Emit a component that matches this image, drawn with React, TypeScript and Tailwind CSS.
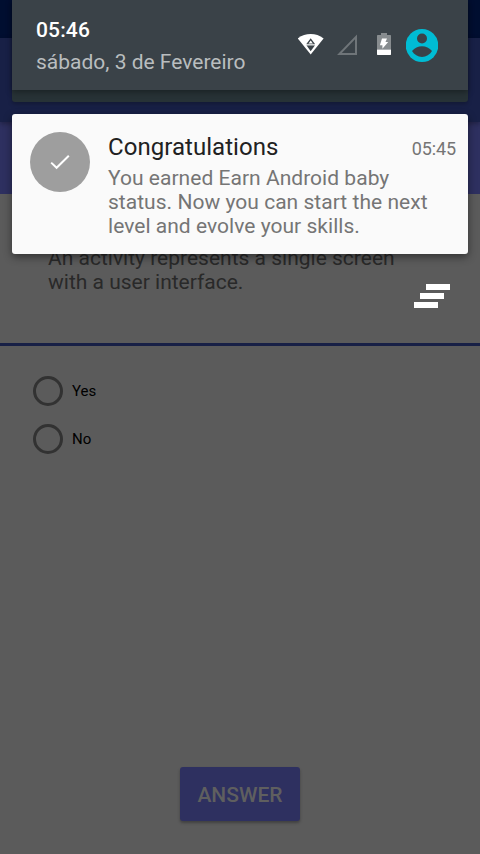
import React from "react";

function WifiIcon() {
  return (
    <svg className="block h-[22px] w-[26px]" viewBox="0 0 26 22">
      <path d="M-0.2 5.4 C7.3 -0.4 18.1 -0.4 25.6 5.4 L12.7 21.5 Z" fill="#fff" />
      <path d="M12.7 5.3 L17 11 H8.4 Z" fill="#3a4248" />
      <path d="M12.7 7.6 L14.9 10.5 H10.5 Z" fill="#fff" />
      <path d="M8.4 10.9 H17 V12.6 H8.4 Z" fill="#cfd2d3" />
      <path d="M8.6 12.6 H16.8 L12.7 18.2 Z" fill="#3a4248" />
    </svg>
  );
}

function SignalIcon() {
  return (
    <svg className="block h-[21px] w-[21px]" viewBox="0 0 21 21">
      <path d="M2.4 20 H19 V2.9 Z" fill="none" stroke="#6f7579" strokeWidth="2" />
    </svg>
  );
}

function BatteryIcon() {
  return (
    <svg className="block h-[22px] w-[14px]" viewBox="0 0 14 22">
      <path d="M4 0 H10 V2 H13.4 L14 2.6 V16.4 H0 V2.6 L0.6 2 H4 Z" fill="#878c8f" />
      <path d="M0 16.4 H14 V21.5 L13.5 22 H0.5 L0 21.5 Z" fill="#fff" />
      <path d="M5 5.6 H10 L8.5 9 H11.2 L5.4 15.8 V12.2 H2.9 Z" fill="#fff" />
    </svg>
  );
}

function AvatarIcon() {
  return (
    <svg className="block h-[34px] w-8" viewBox="0 0 32 34">
      <ellipse cx="16" cy="16.5" rx="16.3" ry="16.5" fill="#00bcd4" />
      <circle cx="16" cy="9.5" r="5" fill="#3a4248" />
      <path d="M6 22.1 C8.5 18.8 12.2 17.2 16 17.2 S23.5 18.8 26 22.1 C23.8 25.8 20.2 28 16 28 S8.2 25.8 6 22.1 Z" fill="#3a4248" />
    </svg>
  );
}

function Option({ label }: { label: string }) {
  return (
    <div className="flex h-12 items-center pl-[33px]">
      <span className="h-[30px] w-[30px] rounded-full border-[3px] border-[#323232]" />
      <span className="ml-[9px] text-[15px] leading-[18px] text-black">{label}</span>
    </div>
  );
}

function QuizScreen() {
  return (
    <div className="flex h-[854px] flex-col bg-[#5b5b5b]">
      <div className="h-[38px] shrink-0 bg-[#000e30]" />
      <div className="relative h-[84px] shrink-0 bg-[#182046] shadow-[0_2px_5px_rgba(0,0,0,0.3)]" />
      <div className="h-[72px] shrink-0 bg-[#2e3060]" />
      <div className="h-[152px] shrink-0 border-b-[3px] border-[#182046] pt-[52px] pl-12 text-[21px] leading-6 text-[#292929]">
        <p>An activity represents a single screen</p>
        <p>with a user interface.</p>
      </div>
      <div className="pt-[21px]">
        <Option label="Yes" />
        <Option label="No" />
      </div>
      <div className="mt-auto flex justify-center pb-[33px]">
        <button className="h-[54px] w-[120px] rounded-[3px] bg-[#2e3060] pt-[3px] text-[21px] font-medium text-[#5f5f5f] shadow-[0_2px_3px_rgba(0,0,0,0.3)]">
          ANSWER
        </button>
      </div>
    </div>
  );
}

function StatusPanel() {
  return (
    <div className="h-[102px] rounded-b-[3px] bg-[#273236] shadow-[0_2px_4px_rgba(0,0,0,0.25)]">
      <div className="flex h-[90px] justify-between bg-[#3a4248] pr-[30px] pl-6 shadow-[0_2px_6px_rgba(0,0,0,0.35)]">
        <div className="pt-[18px] text-[21px] leading-[25px]">
          <p className="font-medium tracking-[0.15px] text-white">05:46</p>
          <p className="mt-[7px] text-[#b9bdbf]">sábado, 3 de Fevereiro</p>
        </div>
        <div className="flex items-start">
          <div className="pt-[33px]"><WifiIcon /></div>
          <div className="ml-[13px] pt-[34px]"><SignalIcon /></div>
          <div className="ml-[19px] pt-[33px]"><BatteryIcon /></div>
          <div className="ml-[15px] pt-[29px]"><AvatarIcon /></div>
        </div>
      </div>
    </div>
  );
}

function Notification() {
  return (
    <div className="mt-3 flex h-[140px] rounded-[3px] bg-[#fafafa] pr-3 pl-[18px] shadow-[0_3px_8px_rgba(0,0,0,0.45)]">
      <div className="mt-[18px] flex h-[60px] w-[60px] shrink-0 items-center justify-center rounded-full bg-[#9e9e9e]">
        <svg className="h-5 w-5" viewBox="0 0 20 20">
          <path d="M1.2 10.6 L6.6 15.8 L18.8 3.8" fill="none" stroke="#fff" strokeWidth="2" />
        </svg>
      </div>
      <div className="ml-[18px] grow pt-[19px]">
        <div className="flex items-baseline justify-between leading-7">
          <h1 className="text-[24px] tracking-[0.04px] text-[#212121]">Congratulations</h1>
          <time className="text-[18px] tracking-[-0.1px] text-[#757575]">05:45</time>
        </div>
        <div className="mt-[3px] text-[21px] leading-6 tracking-[0.03px] text-[#757575]">
          <p>You earned Earn Android baby</p>
          <p>status. Now you can start the next</p>
          <p>level and evolve your skills.</p>
        </div>
      </div>
    </div>
  );
}

function ClearAll() {
  return (
    <div className="mt-[30px] flex justify-end pr-[18px]">
      <svg className="h-6 w-9" viewBox="0 0 36 24" fill="#fff">
        <path d="M12 0H36V6H12ZM6 9H30V15H6ZM0 18H24V24H0Z" />
      </svg>
    </div>
  );
}

export default function App() {
  return (
    <main className="relative h-[854px] w-[480px] overflow-hidden font-['Roboto',sans-serif]">
      <QuizScreen />
      <div className="absolute inset-x-3 top-0">
        <StatusPanel />
        <Notification />
        <ClearAll />
      </div>
    </main>
  );
}
